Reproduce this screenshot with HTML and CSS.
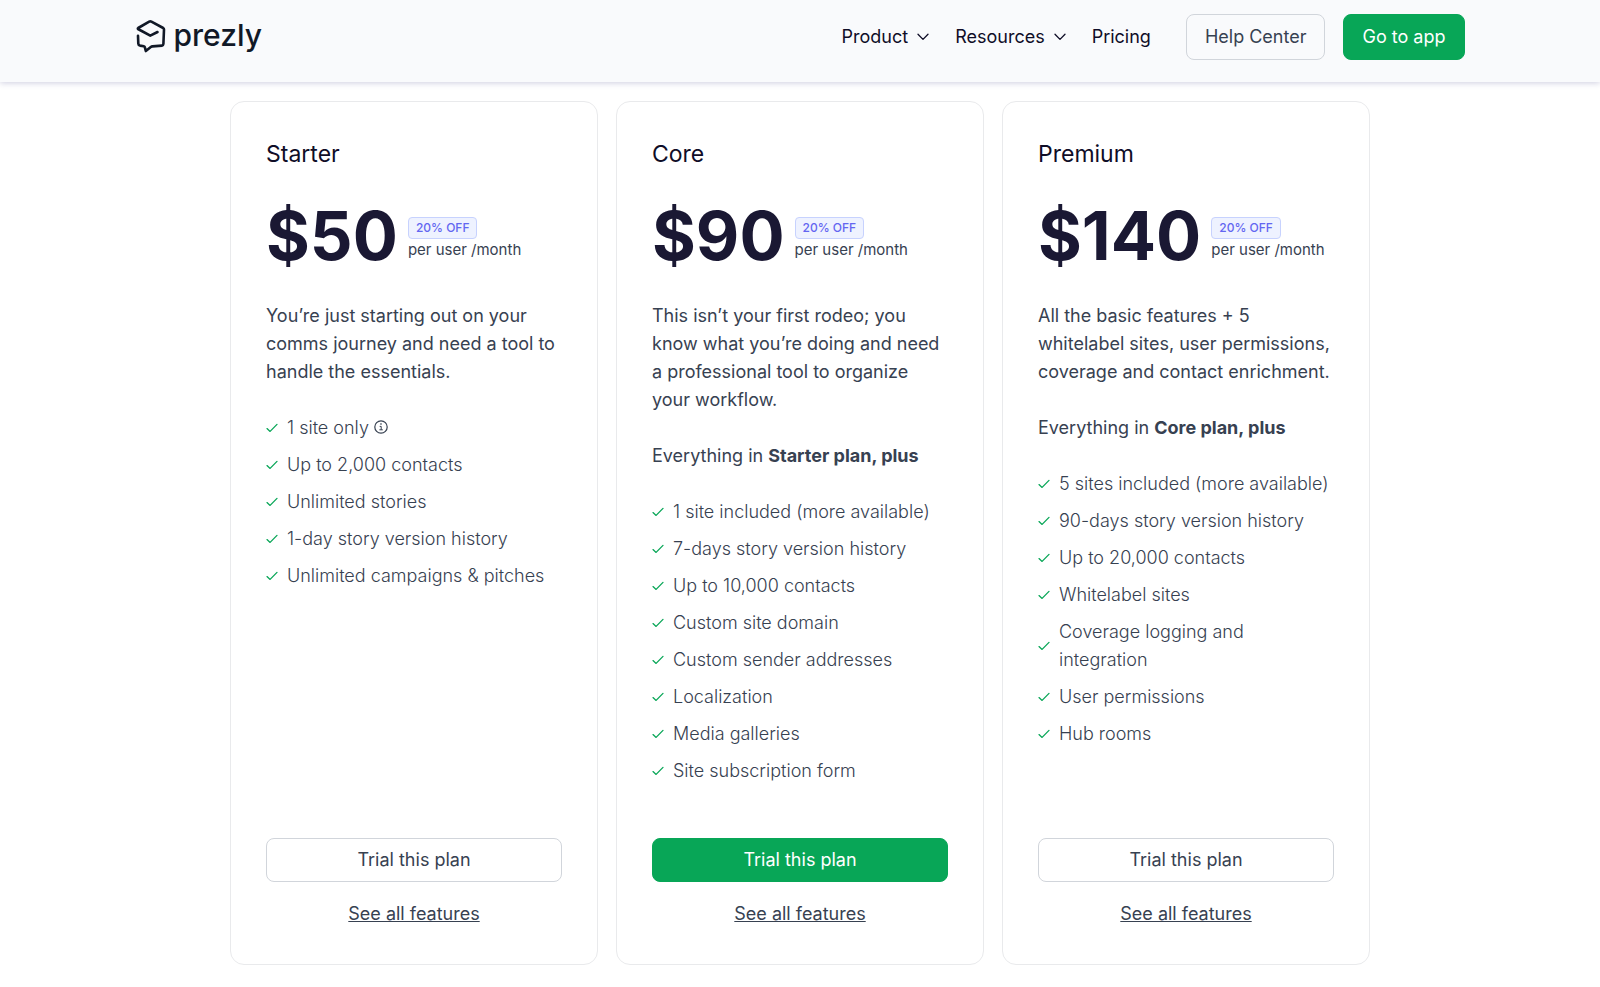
FILE: index.html
```
<!DOCTYPE html>
<html lang="en">
<head>
    <meta charset="UTF-8">
    <meta name="viewport" content="width=device-width, initial-scale=1.0">
    <title>Pricing | Prezly</title>
    <link rel="stylesheet" href="styles.css">
</head>
<body>
    <svg width="0" height="0" class="sprite">
        <symbol id="check" viewBox="0 0 12 10">
            <path d="M1 5.6 4.1 8.4 11 1.4" fill="none" stroke="currentColor" stroke-width="1.3" stroke-linecap="round" stroke-linejoin="round"/>
        </symbol>
        <symbol id="chevron" viewBox="0 0 12 8">
            <path d="M1 1.2 6 6.4 11 1.2" fill="none" stroke="currentColor" stroke-width="1.3" stroke-linecap="round" stroke-linejoin="round"/>
        </symbol>
    </svg>

    <header class="header">
        <div class="header-inner">
            <a href="#" class="logo">
                <svg width="30" height="34" viewBox="0 0 30 34" fill="none" stroke="currentColor" stroke-width="2.6" stroke-linecap="round" stroke-linejoin="round">
                    <path d="M21.5 13 14.3 16.6 2 10Q1.6 9.4 2.2 9L13.2 2.7Q14.3 2.1 15.4 2.7L27.2 9Q28 9.5 28 10.5L27.4 25Q27.3 26.5 26 26.6L16.5 27.4Q15.5 27.5 14.8 28L9.8 32 8.9 28.4Q8.7 27.5 7.8 27.3L4 26.6Q2.4 26.2 2.3 24.6L2 16.8"/>
                </svg>
                <span>prezly</span>
            </a>
            <nav class="nav">
                <button type="button" class="nav-item">Product <svg class="chevron"><use href="#chevron"/></svg></button>
                <button type="button" class="nav-item">Resources <svg class="chevron"><use href="#chevron"/></svg></button>
                <a href="#" class="nav-item">Pricing</a>
            </nav>
            <div class="actions">
                <a href="#" class="btn">Help Center</a>
                <a href="#" class="btn btn-green">Go to app</a>
            </div>
        </div>
    </header>

    <main class="plans">
        <section class="card">
            <h2 class="name">Starter</h2>
            <div class="price">
                <span class="amount">$50</span>
                <div class="terms">
                    <span class="badge">20% OFF</span>
                    <span class="period">per user /month</span>
                </div>
            </div>
            <p class="text">You’re just starting out on your comms journey and need a tool to handle the essentials.</p>
            <ul class="features">
                <li><svg class="check"><use href="#check"/></svg><span>1 site only <svg class="info" viewBox="0 0 14 14" fill="none" stroke="currentColor"><circle cx="7" cy="7" r="6.2" stroke-width="1.2"/><path d="M5.7 6.4H7.2V9.8M5.4 9.8H8.8"/><circle cx="7" cy="4" r=".4"/></svg></span></li>
                <li><svg class="check"><use href="#check"/></svg><span>Up to 2,000 contacts</span></li>
                <li><svg class="check"><use href="#check"/></svg><span>Unlimited stories</span></li>
                <li><svg class="check"><use href="#check"/></svg><span>1-day story version history</span></li>
                <li><svg class="check"><use href="#check"/></svg><span>Unlimited campaigns &amp; pitches</span></li>
            </ul>
            <div class="bottom">
                <button type="button" class="trial">Trial this plan</button>
                <a href="#" class="all">See all features</a>
            </div>
        </section>

        <section class="card">
            <h2 class="name">Core</h2>
            <div class="price">
                <span class="amount">$90</span>
                <div class="terms">
                    <span class="badge">20% OFF</span>
                    <span class="period">per user /month</span>
                </div>
            </div>
            <p class="text">This isn’t your first rodeo; you know what you’re doing and need a professional tool to organize your workflow.</p>
            <p class="text">Everything in <strong>Starter plan, plus</strong></p>
            <ul class="features">
                <li><svg class="check"><use href="#check"/></svg><span>1 site included (more available)</span></li>
                <li><svg class="check"><use href="#check"/></svg><span>7-days story version history</span></li>
                <li><svg class="check"><use href="#check"/></svg><span>Up to 10,000 contacts</span></li>
                <li><svg class="check"><use href="#check"/></svg><span>Custom site domain</span></li>
                <li><svg class="check"><use href="#check"/></svg><span>Custom sender addresses</span></li>
                <li><svg class="check"><use href="#check"/></svg><span>Localization</span></li>
                <li><svg class="check"><use href="#check"/></svg><span>Media galleries</span></li>
                <li><svg class="check"><use href="#check"/></svg><span>Site subscription form</span></li>
            </ul>
            <div class="bottom">
                <button type="button" class="trial trial-green">Trial this plan</button>
                <a href="#" class="all">See all features</a>
            </div>
        </section>

        <section class="card">
            <h2 class="name">Premium</h2>
            <div class="price">
                <span class="amount">$140</span>
                <div class="terms">
                    <span class="badge">20% OFF</span>
                    <span class="period">per user /month</span>
                </div>
            </div>
            <p class="text">All the basic features + 5 whitelabel sites, user permissions, coverage and contact enrichment.</p>
            <p class="text">Everything in <strong>Core plan, plus</strong></p>
            <ul class="features">
                <li><svg class="check"><use href="#check"/></svg><span>5 sites included (more available)</span></li>
                <li><svg class="check"><use href="#check"/></svg><span>90-days story version history</span></li>
                <li><svg class="check"><use href="#check"/></svg><span>Up to 20,000 contacts</span></li>
                <li><svg class="check"><use href="#check"/></svg><span>Whitelabel sites</span></li>
                <li><svg class="check"><use href="#check"/></svg><span>Coverage logging and integration</span></li>
                <li><svg class="check"><use href="#check"/></svg><span>User permissions</span></li>
                <li><svg class="check"><use href="#check"/></svg><span>Hub rooms</span></li>
            </ul>
            <div class="bottom">
                <button type="button" class="trial">Trial this plan</button>
                <a href="#" class="all">See all features</a>
            </div>
        </section>
    </main>
</body>
</html>
```
FILE: styles.css
```
* {
    box-sizing: border-box;
}
body {
    margin: 0;
    font-family: Inter, "Liberation Sans", sans-serif;
    font-size: 18px;
    line-height: 28px;
    color: #374151;
    background-color: #fff;
}
a {
    color: inherit;
    text-decoration: none;
}
button {
    font: inherit;
    color: inherit;
    cursor: pointer;
}
.sprite {
    position: absolute;
}
.header {
    padding: 14px 24px 22px;
    background-color: #f9fafc;
    box-shadow: 0 1px 6px rgba(60, 60, 130, 0.25);
}
.header-inner {
    display: flex;
    align-items: center;
    max-width: 1329px;
    margin: 0 auto;
}
.logo {
    display: flex;
    align-items: center;
    gap: 8px;
    margin-right: auto;
    padding-bottom: 2px;
    font-size: 30px;
    font-weight: 500;
    line-height: 30px;
    color: #111827;
}
.logo span {
    padding-bottom: 3px;
}
.nav {
    display: flex;
    gap: 26px;
    margin-right: 35px;
    color: #0f0d27;
}
.nav-item {
    display: flex;
    align-items: center;
    gap: 9px;
    padding: 0;
    border: none;
    background: none;
}
.chevron {
    width: 12px;
    height: 8px;
}
.actions {
    display: flex;
    gap: 18px;
}
.btn {
    padding: 8px 18px;
    border: 1px solid #d1d5db;
    border-radius: 8px;
}
.btn-green {
    color: #fff;
    border-color: #08a657;
    background-color: #08a657;
}
.plans {
    display: grid;
    grid-template-columns: repeat(3, 1fr);
    gap: 18px;
    max-width: 1140px;
    margin: 0 auto;
    padding: 19px 0 22px;
}
.card {
    display: flex;
    flex-direction: column;
    padding: 36px 35px;
    border: 1px solid #e9eaec;
    border-radius: 14px;
}
.name {
    margin: 0 0 32px;
    font-size: 23px;
    font-weight: 400;
    line-height: 32px;
    color: #0f0d27;
}
.price {
    display: flex;
    align-items: center;
    gap: 10px;
    margin-bottom: 32px;
}
.amount {
    font-size: 67px;
    font-weight: 700;
    line-height: 68px;
    color: #1a1833;
}
.terms {
    display: flex;
    flex-direction: column;
    align-items: flex-start;
    padding-top: 6px;
}
.badge {
    padding: 0 7px;
    border: 1px solid #c7d2fe;
    border-radius: 4px;
    font-size: 12px;
    font-weight: 500;
    line-height: 20px;
    color: #6366f1;
    background-color: #eef2ff;
}
.period {
    font-size: 15px;
    line-height: 22px;
}
.text {
    margin: 0 0 28px;
}
.features {
    display: flex;
    flex-direction: column;
    gap: 9px;
    margin: 0 0 53px;
    padding: 0;
    list-style: none;
    font-weight: 300;
}
.features li {
    display: flex;
    align-items: center;
    gap: 9px;
}
.check {
    flex: none;
    width: 12px;
    height: 10px;
    color: #08a657;
}
.info {
    width: 14px;
    height: 14px;
}
.bottom {
    display: flex;
    flex-direction: column;
    align-items: center;
    gap: 18px;
    margin-top: auto;
}
.trial {
    width: 100%;
    padding: 7px;
    border: 1px solid #d1d5db;
    border-radius: 8px;
    background-color: #fff;
}
.trial-green {
    color: #fff;
    border-color: #08a657;
    background-color: #08a657;
}
.all {
    text-decoration: underline;
}
```
